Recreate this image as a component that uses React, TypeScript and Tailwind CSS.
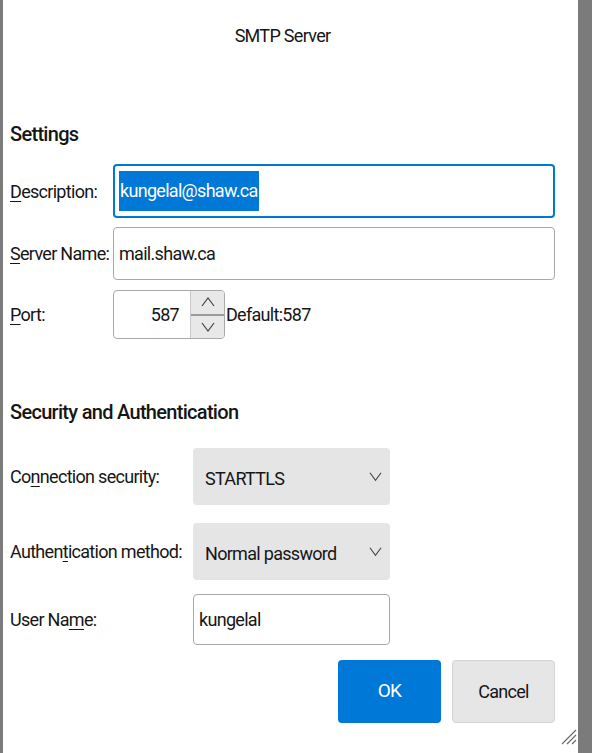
import React from "react";

const FONT = "font-['Roboto','Liberation_Sans',Arial,sans-serif]";

function U({ children }: { children: React.ReactNode }) {
  return <span className="underline underline-offset-[3px] decoration-1">{children}</span>;
}

function Chevron({ up = false, className }: { up?: boolean; className?: string }) {
  return (
    <svg viewBox="0 0 14 10" fill="none" stroke="currentColor" strokeWidth={1.2} className={className}>
      <path d={up ? "M1 9l6-8 6 8" : "M1 1l6 8 6-8"} />
    </svg>
  );
}

function ResizeGrip() {
  return (
    <svg viewBox="0 0 18 18" className="h-[18px] w-[18px]" stroke="#6b6b6b" strokeWidth={1.2}>
      <path d="M17 3L3 17M17 8L8 17M17 13L13 17" />
    </svg>
  );
}

export default function App() {
  return (
    <div className={`flex h-[753px] w-[592px] bg-[#7b7b7b] text-[#161616] tracking-[-0.7px] whitespace-nowrap ${FONT}`}>
      <div className="w-[3px] shrink-0" />
      <div className="relative flex flex-1 flex-col bg-white pl-[7px] pr-[23px] text-[18px]">
        {/* Titre */}
        <div className="flex h-[68px] items-center justify-center pt-[2px]">SMTP Server</div>

        {/* Settings */}
        <div className="mt-[52px] flex h-[28px] items-center text-[20px] font-medium tracking-[-0.7px]">Settings</div>

        <div className="mt-[16px] flex items-center">
          <div className="w-[103px]"><U>D</U>escription:</div>
          <div className="flex h-[54px] flex-1 items-center rounded-[4px] border-2 border-[#0078d7] px-[4px]">
            <span className="bg-[#0078d7] px-[1px] leading-[40px] text-white">kungelal@shaw.ca</span>
          </div>
        </div>

        <div className="mt-[9px] flex items-center">
          <div className="w-[103px]"><U>S</U>erver Name:</div>
          <div className="flex h-[53px] flex-1 items-center rounded-[4px] border border-[#a9a9a9] px-[5px]">
            mail.shaw.ca
          </div>
        </div>

        <div className="mt-[10px] flex items-center">
          <div className="w-[103px]"><U>P</U>ort:</div>
          <div className="flex h-[49px] w-[112px] overflow-hidden rounded-[4px] border border-[#a9a9a9]">
            <div className="flex flex-1 items-center justify-end pr-[11px]">587</div>
            <div className="flex w-[34px] flex-col border-l border-[#c8c8c8] bg-[#e8e8e8] text-[#444]">
              <div className="flex flex-1 items-center justify-center border-b-2 border-[#9a9a9a]">
                <Chevron up className="h-[10px] w-[14px]" />
              </div>
              <div className="flex flex-1 items-center justify-center">
                <Chevron className="h-[10px] w-[14px]" />
              </div>
            </div>
          </div>
          <div className="pl-[1px]">Default:587</div>
        </div>

        {/* Security */}
        <div className="mt-[59px] flex h-[28px] items-center text-[20px] font-medium tracking-[-0.7px]">Security and Authentication</div>

        <div className="mt-[22px] flex items-center">
          <div className="w-[183px]">Co<U>n</U>nection security:</div>
          <div className="flex h-[57px] w-[197px] items-center justify-between rounded-[4px] bg-[#e5e5e5] pl-[12px] pr-[8px]">
            <span className="pt-[4px]">STARTTLS</span>
            <Chevron className="h-[11px] w-[13px] text-[#444]" />
          </div>
        </div>

        <div className="mt-[18px] flex items-center">
          <div className="w-[183px]">Authen<U>t</U>ication method:</div>
          <div className="flex h-[57px] w-[197px] items-center justify-between rounded-[4px] bg-[#e5e5e5] pl-[12px] pr-[8px]">
            <span className="pt-[4px]">Normal password</span>
            <Chevron className="h-[11px] w-[13px] text-[#444]" />
          </div>
        </div>

        <div className="mt-[14px] flex items-center">
          <div className="w-[183px]">User Na<U>m</U>e:</div>
          <div className="flex h-[51px] w-[197px] items-center rounded-[4px] border border-[#a9a9a9] px-[5px]">
            kungelal
          </div>
        </div>

        {/* Boutons */}
        <div className="mt-[15px] flex justify-end gap-[11px]">
          <button className="h-[63px] w-[103px] rounded-[4px] bg-[#0078d7] text-[19px] text-white">OK</button>
          <button className="h-[63px] w-[103px] rounded-[4px] border border-[#d4d4d4] bg-[#e6e6e6] text-[18px]">Cancel</button>
        </div>

        <div className="absolute bottom-[8px] right-[1px]">
          <ResizeGrip />
        </div>
      </div>
      <div className="w-[14px] shrink-0" />
    </div>
  );
}
